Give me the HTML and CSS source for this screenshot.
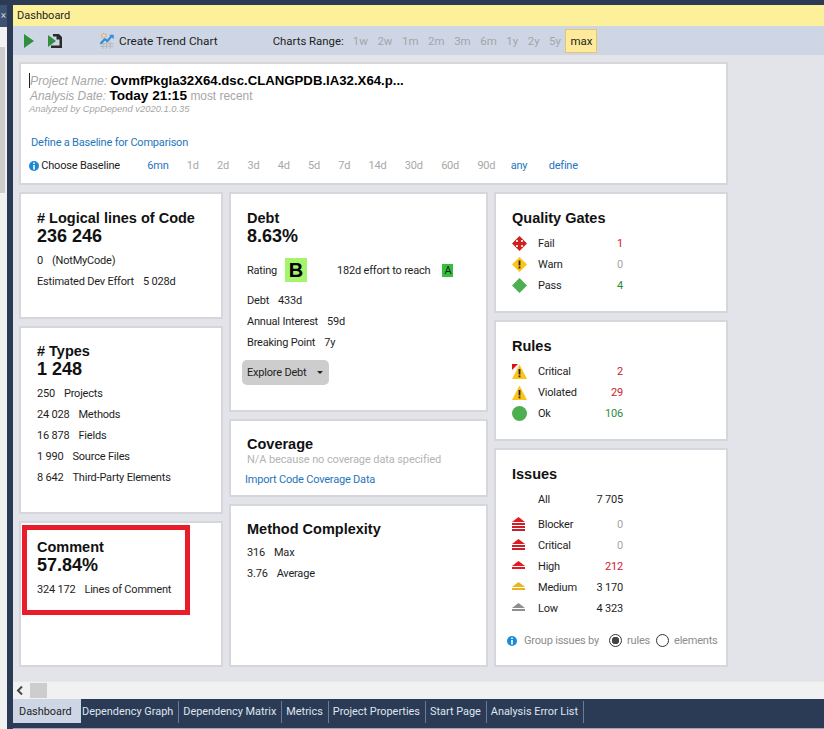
FILE: index.html
```html
<!DOCTYPE html>
<html lang="en">
<head>
  <meta charset="UTF-8">
  <title>Dashboard</title>
  <link rel="stylesheet" href="styles.css">
</head>
<body>

  <div class="top-edge"></div>

  <div class="window">
    <div class="side-strip">
      <div class="side-head">×</div>
      <div class="side-track"><div class="side-thumb"></div></div>
    </div>

    <div class="main">
      <div class="title-bar">Dashboard</div>

      <div class="toolbar">
        <svg class="tool-play" width="10" height="14" viewBox="0 0 10 14"><path d="M0 0L10 7L0 14Z" fill="#2f8f3c"/></svg>
        <svg class="tool-step" width="14" height="14" viewBox="0 0 14 14">
          <path d="M5 0H11L14 3V14H3V11.5H11.5V5.5H8.5V2.5H5Z" fill="#2b2b2b"/>
          <path d="M0 1L8 7L0 13Z" fill="#2f8f3c"/>
        </svg>
        <svg class="tool-trend" width="16" height="16" viewBox="0 0 17 18">
          <path d="M1 12H16M1 15H16M4 9V18M8 9V18M12 9V18" stroke="#b5b5b5" stroke-width="1"/>
          <path d="M1 12L6 7L9 9L14 3" fill="none" stroke="#2f8fd8" stroke-width="2.4"/>
          <path d="M11 2H16V7Z" fill="#2f8fd8"/>
          <circle cx="5" cy="3" r="2.6" fill="none" stroke="#e0a040" stroke-width="1.2" stroke-dasharray="1.5 1"/>
        </svg>
        <span class="tool-label">Create Trend Chart</span>
        <span class="range-label">Charts Range:</span>
        <span class="range-item">1w</span>
        <span class="range-item">2w</span>
        <span class="range-item">1m</span>
        <span class="range-item">2m</span>
        <span class="range-item">3m</span>
        <span class="range-item">6m</span>
        <span class="range-item">1y</span>
        <span class="range-item">2y</span>
        <span class="range-item">5y</span>
        <span class="range-active">max</span>
      </div>

      <div class="content">
        <div class="card project">
          <div class="project-line">
            <em class="faint">Project Name:</em> <b>OvmfPkgIa32X64.dsc.CLANGPDB.IA32.X64.p...</b>
          </div>
          <div class="project-line">
            <em class="faint date">Analysis Date:</em> <b class="today">Today 21:15</b> <span class="recent">most recent</span>
          </div>
          <div class="project-small">Analyzed by CppDepend v2020.1.0.35</div>
          <div class="baseline-link"><a>Define a Baseline for Comparison</a></div>
          <div class="baseline">
            <svg class="info" width="10" height="10" viewBox="0 0 10 10"><circle cx="5" cy="5" r="5" fill="#1c8ad6"/><path d="M4.2 4H5.8V8.4H4.2ZM4.2 1.6H5.8V3.1H4.2Z" fill="#fff"/></svg>
            <span class="baseline-label">Choose Baseline</span>
            <a>6mn</a>
            <span class="off">1d</span>
            <span class="off">2d</span>
            <span class="off">3d</span>
            <span class="off">4d</span>
            <span class="off">5d</span>
            <span class="off">7d</span>
            <span class="off">14d</span>
            <span class="off">30d</span>
            <span class="off">60d</span>
            <span class="off">90d</span>
            <a class="any">any</a>
            <a>define</a>
          </div>
        </div>

        <div class="columns">
          <div class="col">
            <div class="card h-loc">
              <h2># Logical lines of Code</h2>
              <div class="big">236 246</div>
              <div class="rows">
                <div class="row"><span class="num">0</span>(NotMyCode)</div>
                <div class="row"><span class="num">Estimated Dev Effort</span>5 028d</div>
              </div>
            </div>
            <div class="card h-types">
              <h2># Types</h2>
              <div class="big">1 248</div>
              <div class="rows">
                <div class="row"><span class="num">250</span>Projects</div>
                <div class="row"><span class="num">24 028</span>Methods</div>
                <div class="row"><span class="num">16 878</span>Fields</div>
                <div class="row"><span class="num">1 990</span>Source Files</div>
                <div class="row"><span class="num">8 642</span>Third-Party Elements</div>
              </div>
            </div>
            <div class="card grow">
              <h2>Comment</h2>
              <div class="big">57.84%</div>
              <div class="rows">
                <div class="row"><span class="num">324 172</span>Lines of Comment</div>
              </div>
            </div>
          </div>

          <div class="col">
            <div class="card h-debt">
              <h2>Debt</h2>
              <div class="big">8.63%</div>
              <div class="rating">
                <span>Rating</span>
                <span class="grade-b">B</span>
                <span class="reach">182d effort to reach</span>
                <span class="grade-a">A</span>
              </div>
              <div class="rows">
                <div class="row"><span class="num">Debt</span>433d</div>
                <div class="row"><span class="num">Annual Interest</span>59d</div>
                <div class="row"><span class="num">Breaking Point</span>7y</div>
              </div>
              <div class="explore">Explore Debt<i class="caret"></i></div>
            </div>
            <div class="card h-cover">
              <h2>Coverage</h2>
              <div class="na">N/A because no coverage data specified</div>
              <a class="import">Import Code Coverage Data</a>
            </div>
            <div class="card grow complexity">
              <h2>Method Complexity</h2>
              <div class="rows">
                <div class="row"><span class="num">316</span>Max</div>
                <div class="row"><span class="num">3.76</span>Average</div>
              </div>
            </div>
          </div>

          <div class="col">
            <div class="card h-gates">
              <h2>Quality Gates</h2>
              <div class="status first">
                <svg width="15" height="15" viewBox="0 0 15 15"><path d="M7.5 0L15 7.5L7.5 15L0 7.5Z" fill="#d0201c"/><circle cx="5" cy="5" r="1.1" fill="#fff"/><circle cx="10" cy="5" r="1.1" fill="#fff"/><circle cx="5" cy="10" r="1.1" fill="#fff"/><circle cx="10" cy="10" r="1.1" fill="#fff"/></svg>
                <span>Fail</span><span class="red">1</span>
              </div>
              <div class="status">
                <svg width="15" height="15" viewBox="0 0 15 15"><path d="M7.5 0L15 7.5L7.5 15L0 7.5Z" fill="#fcc419"/><path d="M6.6 3.5H8.4V8.6H6.6ZM6.6 9.6H8.4V11.4H6.6Z" fill="#222"/></svg>
                <span>Warn</span><span class="zero">0</span>
              </div>
              <div class="status">
                <svg width="15" height="15" viewBox="0 0 15 15"><path d="M7.5 0L15 7.5L7.5 15L0 7.5Z" fill="#4caf50"/></svg>
                <span>Pass</span><span class="green">4</span>
              </div>
            </div>
            <div class="card h-rules">
              <h2>Rules</h2>
              <div class="status first">
                <svg width="15" height="15" viewBox="0 0 15 15"><path d="M7.5 0.5L15 15H0Z" fill="#fcc419"/><path d="M0 0H6L0 6Z" fill="#e01010"/><path d="M6.6 5H8.4V10.4H6.6ZM6.6 11.4H8.4V13.2H6.6Z" fill="#222"/></svg>
                <span>Critical</span><span class="red">2</span>
              </div>
              <div class="status">
                <svg width="15" height="15" viewBox="0 0 15 15"><path d="M7.5 0.5L15 15H0Z" fill="#fcc419"/><path d="M6.6 5H8.4V10.4H6.6ZM6.6 11.4H8.4V13.2H6.6Z" fill="#222"/></svg>
                <span>Violated</span><span class="red">29</span>
              </div>
              <div class="status">
                <svg width="15" height="15" viewBox="0 0 15 15"><circle cx="7.5" cy="7.5" r="7.5" fill="#4caf50"/></svg>
                <span>Ok</span><span class="green">106</span>
              </div>
            </div>
            <div class="card grow">
              <h2>Issues</h2>
              <div class="status first all">
                <i></i><span>All</span><span>7 705</span>
              </div>
              <div class="status">
                <svg width="13" height="16" viewBox="0 0 13 16"><path d="M6.5 0L13 5H0Z" fill="#e21b23"/><path d="M0 6H13V8H0ZM0 9H13V11H0ZM0 12H13V14H0Z" fill="#c8202a"/></svg>
                <span>Blocker</span><span class="zero">0</span>
              </div>
              <div class="status">
                <svg width="13" height="16" viewBox="0 0 13 16"><path d="M6.5 1L13 6H0Z" fill="#e21b23"/><path d="M0 7H13V9H0ZM0 10H13V12H0Z" fill="#d01e28"/></svg>
                <span>Critical</span><span class="zero">0</span>
              </div>
              <div class="status">
                <svg width="13" height="16" viewBox="0 0 13 16"><path d="M6.5 2L13 7H0Z" fill="#e21b23"/><path d="M0 8H13V10H0Z" fill="#e21b23"/></svg>
                <span>High</span><span class="red">212</span>
              </div>
              <div class="status">
                <svg width="13" height="16" viewBox="0 0 13 16"><path d="M6.5 2L13 7H0Z" fill="#ecb320"/><path d="M0 8H13V10H0Z" fill="#ecb320"/></svg>
                <span>Medium</span><span>3 170</span>
              </div>
              <div class="status">
                <svg width="13" height="16" viewBox="0 0 13 16"><path d="M6.5 2L13 7H0Z" fill="#8f8f8f"/><path d="M0 8H13V10H0Z" fill="#8f8f8f"/></svg>
                <span>Low</span><span>4 323</span>
              </div>
              <div class="group-by">
                <svg class="info" width="10" height="10" viewBox="0 0 10 10"><circle cx="5" cy="5" r="5" fill="#1c8ad6"/><path d="M4.2 4H5.8V8.4H4.2ZM4.2 1.6H5.8V3.1H4.2Z" fill="#fff"/></svg>
                <span class="group-label">Group issues by</span>
                <span class="radio on"></span><span class="radio-text">rules</span>
                <span class="radio"></span><span class="radio-text">elements</span>
              </div>
            </div>
          </div>
        </div>
      </div>

      <div class="scrollbar">
        <svg width="7" height="9" viewBox="0 0 7 9"><path d="M6 0.5L2 4.5L6 8.5" fill="none" stroke="#444" stroke-width="2"/></svg>
        <div class="scroll-thumb"></div>
      </div>

      <div class="tabs">
        <span class="tab active">Dashboard</span>
        <span class="tab first-off">Dependency Graph</span>
        <span class="tab">Dependency Matrix</span>
        <span class="tab">Metrics</span>
        <span class="tab">Project Properties</span>
        <span class="tab">Start Page</span>
        <span class="tab">Analysis Error List</span>
      </div>
    </div>
  </div>

  <!-- red annotation drawn on top of the screenshot -->
  <div class="highlight"></div>

</body>
</html>
```

FILE: styles.css
```css
* {
  box-sizing: border-box;
}

html, body {
  height: 100%;
}

body {
  margin: 0;
  overflow: hidden;
  font-family: Roboto, 'Noto Sans', sans-serif;
  font-size: 11px;
  letter-spacing: -0.2px;
  color: #1e1e1e;
  background: #f1f1f1;
  display: flex;
  flex-direction: column;
}

a {
  color: #1e76bd;
}

.top-edge {
  height: 5px;
  flex: none;
  background: #2b3a55;
}

.window {
  flex: 1;
  display: flex;
  min-height: 0;
}

.side-strip {
  width: 13px;
  flex: none;
  border-right: 6px solid #2b3a55;
  background: #f1f1f1;
  display: flex;
  flex-direction: column;
}

.side-head {
  height: 22px;
  background: #3d5273;
  color: #c8d2e2;
  font-size: 10px;
  letter-spacing: 0;
  line-height: 22px;
  text-align: center;
}

.side-track {
  flex: 1;
  padding-top: 20px;
}

.side-thumb {
  width: 5px;
  height: 146px;
  background: #cdcdcd;
}

.main {
  flex: 1;
  min-width: 0;
  display: flex;
  flex-direction: column;
}

.title-bar {
  height: 21px;
  flex: none;
  background: #fdf09a;
  padding-left: 4px;
  line-height: 21px;
  letter-spacing: 0;
}

.toolbar {
  height: 29px;
  flex: none;
  background: #ced6e5;
  display: flex;
  align-items: center;
  letter-spacing: 0;
}

.tool-play {
  margin-left: 11px;
}

.tool-step {
  margin-left: 14px;
}

.tool-trend {
  margin-left: 37px;
}

.tool-label {
  margin-left: 4px;
  font-size: 11.8px;
}

.range-label {
  margin-left: 55px;
  margin-right: 9px;
  font-size: 11.4px;
}

.range-item {
  color: #a4a4a8;
  font-size: 11.5px;
  margin-right: 9.5px;
}

.range-active {
  margin-left: -5px;
  width: 32px;
  height: 24px;
  font-size: 11.5px;
  line-height: 23px;
  text-align: center;
  background: #ffe99a;
  border: 1px solid #e0c870;
}

.content {
  flex: 1;
  min-height: 0;
  background: #e3e3ea;
  padding: 7px 96px 14px 6px;
  display: flex;
  flex-direction: column;
  gap: 7px;
}

.card {
  background: #fff;
  border: 2px solid #d6d6dc;
  padding: 15px 16px 0;
}

.grow {
  flex: 1;
}

.project {
  height: 123px;
  flex: none;
  padding: 9px 8px 0;
}

.project-line {
  height: 15px;
  font-family: 'Liberation Sans', sans-serif;
  font-size: 12.2px;
  letter-spacing: 0;
  line-height: 15px;
  border-left: 1px solid transparent;
}

.project-line:first-child {
  border-left-color: #222;
}

.project-line b {
  color: #000;
  font-size: 13.2px;
}

.project-line .today {
  font-size: 13.6px;
}

.faint {
  color: #a6a6a6;
  font-style: italic;
}

.date {
  font-size: 11.9px;
}

.recent {
  color: #a6a6a6;
  font-size: 11.9px;
}

.project-small {
  margin-top: -1px;
  font-family: 'Liberation Sans', sans-serif;
  font-size: 9.4px;
  font-style: italic;
  letter-spacing: 0;
  color: #a6a6a6;
  line-height: 13px;
}

.baseline-link {
  margin-top: 20px;
  padding-left: 2px;
  line-height: 16px;
}

.baseline {
  margin-top: 7px;
  display: flex;
  align-items: center;
  gap: 18.3px;
  line-height: 16px;
}

.baseline .off {
  color: #a8a8a8;
}

.baseline .any {
  margin-left: -3px;
  margin-right: 3px;
}

.info {
  flex: none;
}

.baseline-label {
  margin-left: -16px;
  margin-right: 9px;
}

.columns {
  flex: 1;
  min-height: 0;
  display: grid;
  grid-template-columns: 204px 259px 234px;
  gap: 6px;
}

.col {
  display: flex;
  flex-direction: column;
  gap: 7px;
}

h2 {
  margin: 0;
  font-family: 'Liberation Sans', sans-serif;
  font-size: 14.5px;
  font-weight: bold;
  letter-spacing: 0;
  line-height: 18px;
  color: #111;
}

.big {
  font-family: 'Liberation Sans', sans-serif;
  font-size: 18px;
  font-weight: bold;
  letter-spacing: 0;
  line-height: 18px;
  color: #111;
}

.rows {
  margin-top: 5px;
}

.row {
  height: 21px;
  line-height: 21px;
  white-space: nowrap;
}

.num {
  margin-right: 9px;
}

.h-loc {
  height: 127px;
  flex: none;
}

.h-types {
  height: 188px;
  flex: none;
  padding-top: 14px;
}

.h-debt {
  height: 220px;
  flex: none;
}

.h-cover {
  height: 78px;
  flex: none;
  padding-top: 14px;
}

.complexity {
  padding-top: 14px;
}

.complexity .rows {
  margin-top: 4px;
}

.h-gates {
  height: 121px;
  flex: none;
}

.h-rules {
  height: 121px;
  flex: none;
}

.rating {
  margin-top: 13px;
  height: 24px;
  display: flex;
  align-items: center;
  white-space: nowrap;
}

.grade-b {
  width: 22px;
  height: 24px;
  margin-left: 8px;
  background: #a4f56c;
  color: #000;
  font-family: 'Liberation Sans', sans-serif;
  font-size: 20px;
  font-weight: bold;
  letter-spacing: 0;
  line-height: 24px;
  text-align: center;
}

.reach {
  margin-left: 30px;
}

.grade-a {
  width: 11px;
  height: 13px;
  margin-left: 12px;
  background: #34bf3d;
  line-height: 13px;
  text-align: center;
}

.h-debt .rows {
  margin-top: 8px;
}

.explore {
  margin: 7px 0 0 -5px;
  width: 87px;
  height: 25px;
  padding-left: 5px;
  display: flex;
  align-items: center;
  white-space: nowrap;
  background: #cdcdcd;
  border-radius: 5px;
}

.caret {
  margin-left: 11px;
  border-left: 3px solid transparent;
  border-right: 3px solid transparent;
  border-top: 3px solid #222;
}

.na {
  color: #b4b4b4;
  letter-spacing: -0.1px;
  line-height: 14px;
}

.import {
  display: block;
  margin: 5px 0 0 -2px;
  line-height: 16px;
}

.status {
  display: grid;
  grid-template-columns: 26px 1fr auto;
  width: 111px;
  height: 21px;
  line-height: 21px;
  align-items: center;
}

.status.first {
  margin-top: 6px;
}

.status.all {
  margin-bottom: 4px;
}

.red {
  color: #d4202c;
}

.green {
  color: #2f8a3c;
}

.zero {
  color: #a6a6a6;
}

.group-by {
  margin: 11px 0 0 -5px;
  display: flex;
  align-items: center;
  height: 21px;
  color: #8c8c8c;
  white-space: nowrap;
}

.group-label {
  margin-left: 7px;
  margin-right: 10px;
}

.radio {
  width: 13px;
  height: 13px;
  flex: none;
  border: 1px solid #333;
  border-radius: 50%;
  background: #fff;
  margin-right: 5px;
}

.radio.on {
  background: radial-gradient(circle, #444 0 3.5px, #fff 4px);
}

.radio-text {
  margin-right: 6px;
}

.scrollbar {
  height: 18px;
  flex: none;
  background: #f1f1f1;
  border-top: 1px solid #e8e8e8;
  display: flex;
  align-items: center;
  padding-left: 3px;
}

.scroll-thumb {
  width: 17px;
  height: 15px;
  margin-left: 7px;
  background: #cdcdcd;
}

.tabs {
  height: 30px;
  flex: none;
  background: #2b3a55;
  border-bottom: 1px solid #9aa5b8;
  display: flex;
  align-items: flex-start;
  font-size: 10.9px;
  letter-spacing: 0;
}

.tab {
  height: 24px;
  padding: 0 5px;
  line-height: 25px;
  color: #dfe6f0;
  position: relative;
  white-space: nowrap;
}

.tab.active {
  width: 68px;
  padding: 0 0 0 6px;
  background: #ced6e5;
  color: #1e1e1e;
}

.tab.first-off {
  padding-left: 1px;
}

.tab:not(.active)::after {
  content: "";
  position: absolute;
  right: -1px;
  top: 2px;
  bottom: 0;
  width: 1px;
  background: #6c7c96;
}

.highlight {
  position: absolute;
  left: 22px;
  top: 525px;
  width: 168px;
  height: 90px;
  border: 5px solid #e81c2a;
}
```
